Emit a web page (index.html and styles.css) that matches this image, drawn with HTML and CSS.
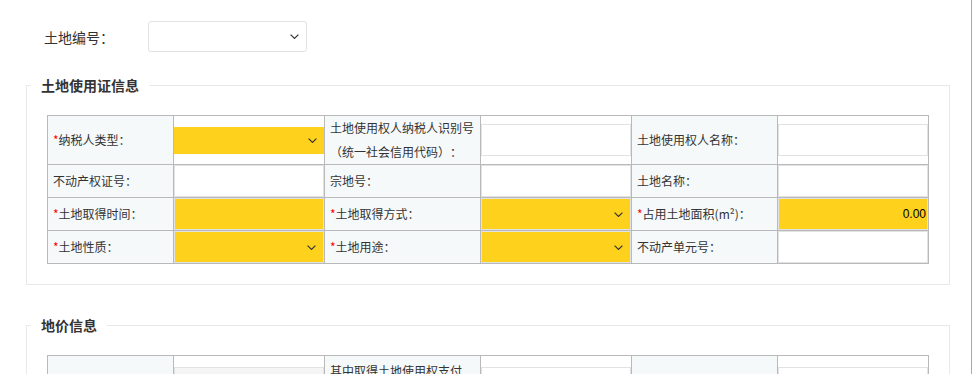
FILE: index.html
```html
<!DOCTYPE html>
<html lang="zh-CN">
<head>
<meta charset="utf-8">
<title>土地信息</title>
<link rel="stylesheet" href="styles.css">
</head>
<body>
<div class="page">
  <div class="top-row">
    <span class="top-label">土地编号：</span>
    <div class="sel plain"><svg class="chev" width="9" height="5" viewBox="0 0 9 5"><path d="M0.6 0.6L4.5 4.4L8.4 0.6"/></svg></div>
  </div>

  <fieldset class="group">
    <legend>土地使用证信息</legend>
    <table class="grid">
      <colgroup><col class="c1"><col class="c2"><col class="c3"><col class="c4"><col class="c5"><col class="c6"></colgroup>
      <tr class="tall">
        <th><span class="req">*</span>纳税人类型：</th>
        <td><div class="sel yellow short"><svg class="chev" width="9" height="5" viewBox="0 0 9 5"><path d="M0.6 0.6L4.5 4.4L8.4 0.6"/></svg></div></td>
        <th>土地使用权人纳税人识别号<br>（统一社会信用代码）：</th>
        <td><input class="inp" type="text"></td>
        <th>土地使用权人名称：</th>
        <td><input class="inp" type="text"></td>
      </tr>
      <tr class="norm">
        <th>不动产权证号：</th>
        <td><input class="inp" type="text"></td>
        <th>宗地号：</th>
        <td><input class="inp" type="text"></td>
        <th>土地名称：</th>
        <td><input class="inp" type="text"></td>
      </tr>
      <tr class="norm">
        <th><span class="req">*</span>土地取得时间：</th>
        <td><input class="inp yellow" type="text"></td>
        <th><span class="req">*</span>土地取得方式：</th>
        <td><div class="sel yellow"><svg class="chev" width="9" height="5" viewBox="0 0 9 5"><path d="M0.6 0.6L4.5 4.4L8.4 0.6"/></svg></div></td>
        <th><span class="req">*</span>占用土地面积(m²)：</th>
        <td><input class="inp yellow num" type="text" value="0.00"></td>
      </tr>
      <tr class="norm">
        <th><span class="req">*</span>土地性质：</th>
        <td><div class="sel yellow"><svg class="chev" width="9" height="5" viewBox="0 0 9 5"><path d="M0.6 0.6L4.5 4.4L8.4 0.6"/></svg></div></td>
        <th><span class="req">*</span>土地用途：</th>
        <td><div class="sel yellow"><svg class="chev" width="9" height="5" viewBox="0 0 9 5"><path d="M0.6 0.6L4.5 4.4L8.4 0.6"/></svg></div></td>
        <th>不动产单元号：</th>
        <td><input class="inp" type="text"></td>
      </tr>
    </table>
  </fieldset>

  <fieldset class="group second">
    <legend>地价信息</legend>
    <table class="grid">
      <colgroup><col class="c1"><col class="c2"><col class="c3"><col class="c4"><col class="c5"><col class="c6"></colgroup>
      <tr class="tall roomy">
        <th></th>
        <td><input class="inp disabled" type="text" disabled></td>
        <th>其中取得土地使用权支付<br>的金额：</th>
        <td><input class="inp" type="text"></td>
        <th></th>
        <td><input class="inp" type="text"></td>
      </tr>
    </table>
  </fieldset>
</div>
</body>
</html>
```

FILE: styles.css
```css
* {
  box-sizing: border-box;
}

html,
body {
  margin: 0;
  padding: 0;
  background: #fff;
}

body {
  font-family: "Noto Sans CJK TC", "Noto Sans CJK SC", sans-serif;
  color: #333;
  text-spacing-trim: space-all;
}

.page {
  width: 972px;
  height: 374px;
  overflow: hidden;
  border-right: 1px solid #a9a9a9;
}

.top-row {
  display: flex;
  align-items: center;
  padding: 21px 0 0 44px;
}

.top-label {
  width: 104px;
  font-size: 14px;
  line-height: 20px;
  color: #333;
}

.sel {
  display: flex;
  align-items: center;
  justify-content: flex-end;
  padding-right: 7px;
}

.sel.plain {
  width: 159px;
  height: 31px;
  border: 1px solid #e2e2e2;
  border-radius: 3px;
  background: #fff;
}

.chev path {
  fill: none;
  stroke: #333;
  stroke-width: 1.2;
}

.group {
  width: 924px;
  margin: 23px 0 0 26px;
  padding: 20px;
  border: 1px solid #e8e8e8;
  min-width: 0;
}

.group.second {
  margin-top: 30px;
}

.group legend {
  margin-left: -16px;
  padding: 0 10px;
  font-size: 14px;
  line-height: 20px;
  font-weight: bold;
  color: #333;
}

.grid {
  width: 881px;
  table-layout: fixed;
  border-collapse: collapse;
  font-size: 12px;
}

.c1 { width: 126px; }
.c2 { width: 151px; }
.c3 { width: 156px; }
.c4 { width: 151px; }
.c5 { width: 146px; }
.c6 { width: 151px; }

.grid th,
.grid td {
  border: 1px solid #b9b9b9;
  vertical-align: middle;
}

.grid th {
  padding: 0 5px;
  background: #f6f9fa;
  font-weight: normal;
  text-align: left;
  line-height: 24px;
  color: #333;
  white-space: nowrap;
}

.grid tr.roomy th {
  padding-top: 3px;
  padding-bottom: 3px;
}

.grid td {
  padding: 0;
  background: #fff;
}

.grid tr.norm {
  height: 33px;
}

.req {
  color: #f00;
}

.inp {
  display: block;
  width: 100%;
  height: 32px;
  margin: 0;
  padding: 0 1px;
  border: 1px solid #e2e2e2;
  background: #fff;
  font-family: "Liberation Sans", Arial, sans-serif;
  font-size: 12px;
  color: #000;
  outline: none;
}

.inp.yellow {
  background: #fdd11c;
}

.inp.num {
  text-align: right;
}

.inp.disabled {
  background: #f5f5f5;
}

.sel.yellow {
  width: 100%;
  height: 32px;
  border: 1px solid #e2e2e2;
  background: #fdd11c;
}

.sel.yellow.short {
  height: 27px;
  border: none;
}
```
